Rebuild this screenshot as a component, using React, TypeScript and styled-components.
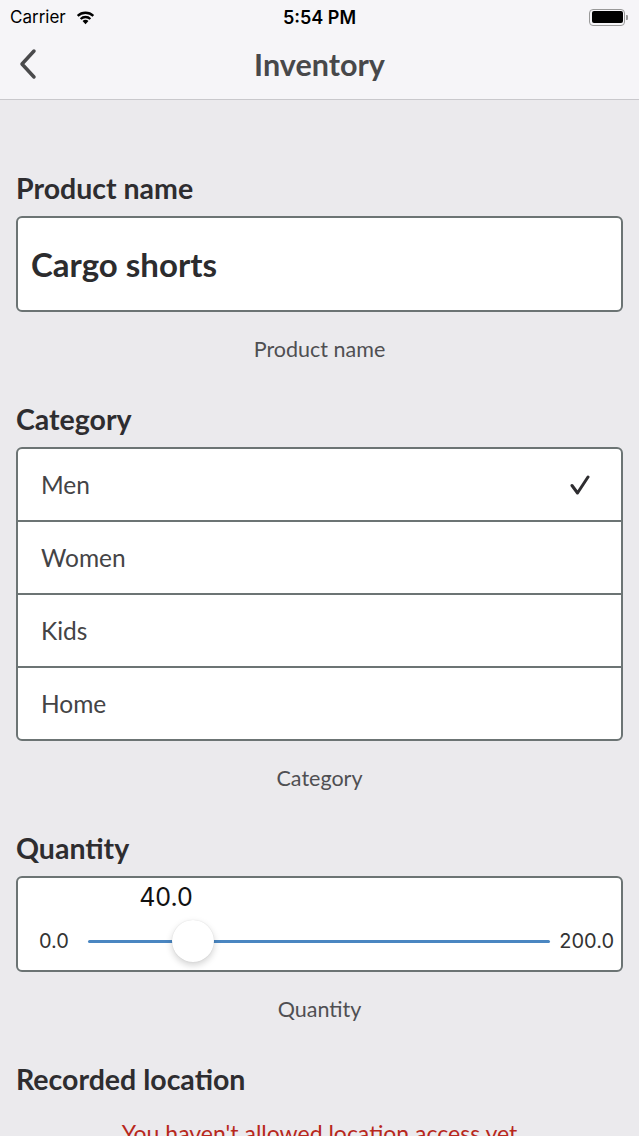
import React from "react";
import styled, { createGlobalStyle } from "styled-components";

const GlobalStyle = createGlobalStyle`
  html, body {
    margin: 0;
    padding: 0;
    background: #ebeaed;
  }
  body {
    font-family: Lato, "Open Sans", sans-serif;
    overflow: hidden;
  }
`;

const Screen = styled.div`
  width: 639px;
  height: 1136px;
  overflow: hidden;
  background: #ebeaed;
`;

const Header = styled.div`
  background: #f6f5f8;
  border-bottom: 1px solid #c9c8cc;
`;

const StatusBar = styled.div`
  height: 34px;
  display: grid;
  grid-template-columns: 1fr auto 1fr;
  align-items: center;
  padding: 0 10px;
  font-family: Inter, Roboto, sans-serif;
  font-size: 17px;
  color: #000;
`;

const Carrier = styled.div`
  display: flex;
  align-items: center;
  gap: 9px;
  font-weight: 400;
`;

const Clock = styled.div`
  font-weight: 600;
  font-size: 18px;
`;

const Battery = styled.div`
  justify-self: end;
  display: flex;
  align-items: center;
  gap: 1px;
  margin-right: 1px;
`;

const BatteryBody = styled.div`
  border: 1.5px solid #999;
  border-radius: 4px;
  padding: 1.5px;
  box-sizing: border-box;
  width: 36px;
  height: 17px;
  div {
    width: 100%;
    height: 100%;
    background: #000;
    border-radius: 2px;
  }
`;

const BatteryTip = styled.div`
  width: 2px;
  height: 5px;
  background: #999;
  border-radius: 0 1px 1px 0;
`;

const NavBar = styled.div`
  height: 60px;
  padding-bottom: 5px;
  display: grid;
  grid-template-columns: 60px 1fr 60px;
  align-items: center;
`;

const BackButton = styled.button`
  border: 0;
  background: none;
  padding: 0 0 0 18px;
  height: 40px;
  display: flex;
  align-items: center;
  color: #4a4a4c;
`;

const Title = styled.h1`
  margin: 0;
  text-align: center;
  font-size: 30.5px;
  font-weight: 700;
  color: #48484a;
`;

const Content = styled.div`
  padding: 0 16px;
`;

const Label = styled.h2<{ $top?: number }>`
  margin: ${(p) => p.$top ?? 42}px 0 12px;
  font-size: 28.5px;
  line-height: 32px;
  font-weight: 700;
  color: #2e2d30;
`;

const Box = styled.div`
  background: #fff;
  border: 2px solid #6c7474;
  border-radius: 6px;
  overflow: hidden;
`;

const TextInput = styled(Box)`
  height: 92px;
  display: flex;
  align-items: center;
  padding: 0 13px;
  font-size: 33px;
  font-weight: 700;
  color: #2c2c2e;
`;

const Helper = styled.div`
  margin-top: 25px;
  text-align: center;
  font-size: 21.5px;
  line-height: 24px;
  color: #4f4f52;
`;

const Option = styled.div`
  height: 71px;
  display: flex;
  align-items: center;
  justify-content: space-between;
  padding: 0 31px 0 23px;
  font-size: 24.5px;
  color: #444446;
  & + & {
    border-top: 2px solid #6c7474;
  }
`;

const SliderBox = styled(Box)`
  height: 92px;
  position: relative;
`;

const SliderValue = styled.div`
  position: absolute;
  top: 4px;
  left: 103px;
  width: 90px;
  text-align: center;
  font-family: Inter, Roboto, sans-serif;
  font-size: 25px;
  color: #111;
`;

const SliderRow = styled.div`
  position: absolute;
  left: 0;
  right: 0;
  top: 47px;
  height: 32px;
  display: flex;
  align-items: center;
  padding: 0 7px 0 21px;
  gap: 19px;
  font-family: Inter, Roboto, sans-serif;
  font-size: 20px;
  color: #333;
`;

const Track = styled.div`
  flex: 1;
  height: 3px;
  background: #4a86c1;
  border-radius: 2px;
  position: relative;
  margin-right: -10px;
`;

const Thumb = styled.div`
  position: absolute;
  top: 50%;
  width: 42px;
  height: 42px;
  margin: -21px 0 0 -21px;
  border-radius: 50%;
  background: #fff;
  box-shadow: 0 3px 7px rgba(0, 0, 0, 0.18), 0 0 1px rgba(0, 0, 0, 0.15);
`;

const Warning = styled.div`
  margin-top: 24px;
  text-align: center;
  font-size: 23px;
  line-height: 28px;
  color: #b8281c;
`;

const categories = ["Men", "Women", "Kids", "Home"];

export default function App() {
  const quantity = 40;
  const max = 200;
  return (
    <Screen>
      <GlobalStyle />
      <Header>
        <StatusBar>
          <Carrier>
            Carrier
            <svg width="21" height="15" viewBox="0 0 20 14">
              <path d="M10 13.5 L7.2 10.4 A4 4 0 0 1 12.8 10.4 Z" fill="#000" />
              <path d="M4.6 7.6 A7.8 7.8 0 0 1 15.4 7.6 L13.9 9.2 A5.6 5.6 0 0 0 6.1 9.2 Z" fill="#000" />
              <path d="M1.8 4.7 A11.8 11.8 0 0 1 18.2 4.7 L16.7 6.3 A9.6 9.6 0 0 0 3.3 6.3 Z" fill="#000" />
            </svg>
          </Carrier>
          <Clock>5:54 PM</Clock>
          <Battery>
            <BatteryBody>
              <div />
            </BatteryBody>
            <BatteryTip />
          </Battery>
        </StatusBar>
        <NavBar>
          <BackButton aria-label="Back">
            <svg width="20" height="32" viewBox="0 0 20 32">
              <path d="M16 3 L4 16 L16 29" fill="none" stroke="#4a4a4c" strokeWidth="3.5" strokeLinecap="round" strokeLinejoin="round" />
            </svg>
          </BackButton>
          <Title>Inventory</Title>
          <div />
        </NavBar>
      </Header>

      <Content>
        <Label $top={72}>Product name</Label>
        <TextInput>Cargo shorts</TextInput>
        <Helper>Product name</Helper>

        <Label>Category</Label>
        <Box>
          {categories.map((c, i) => (
            <Option key={c}>
              {c}
              {i === 0 && (
                <svg width="20" height="20" viewBox="0 0 20 20">
                  <path d="M2 10.5 L7.5 18 L18 2" fill="none" stroke="#2e2d30" strokeWidth="3" strokeLinecap="round" strokeLinejoin="round" />
                </svg>
              )}
            </Option>
          ))}
        </Box>
        <Helper>Category</Helper>

        <Label>Quantity</Label>
        <SliderBox>
          <SliderValue>{quantity.toFixed(1)}</SliderValue>
          <SliderRow>
            <span>0.0</span>
            <Track>
              <Thumb style={{ left: `calc(21px + (100% - 42px) * ${quantity / max})` }} />
            </Track>
            <span>{max.toFixed(1)}</span>
          </SliderRow>
        </SliderBox>
        <Helper>Quantity</Helper>

        <Label>Recorded location</Label>
        <Warning>You haven't allowed location access yet</Warning>
      </Content>
    </Screen>
  );
}
